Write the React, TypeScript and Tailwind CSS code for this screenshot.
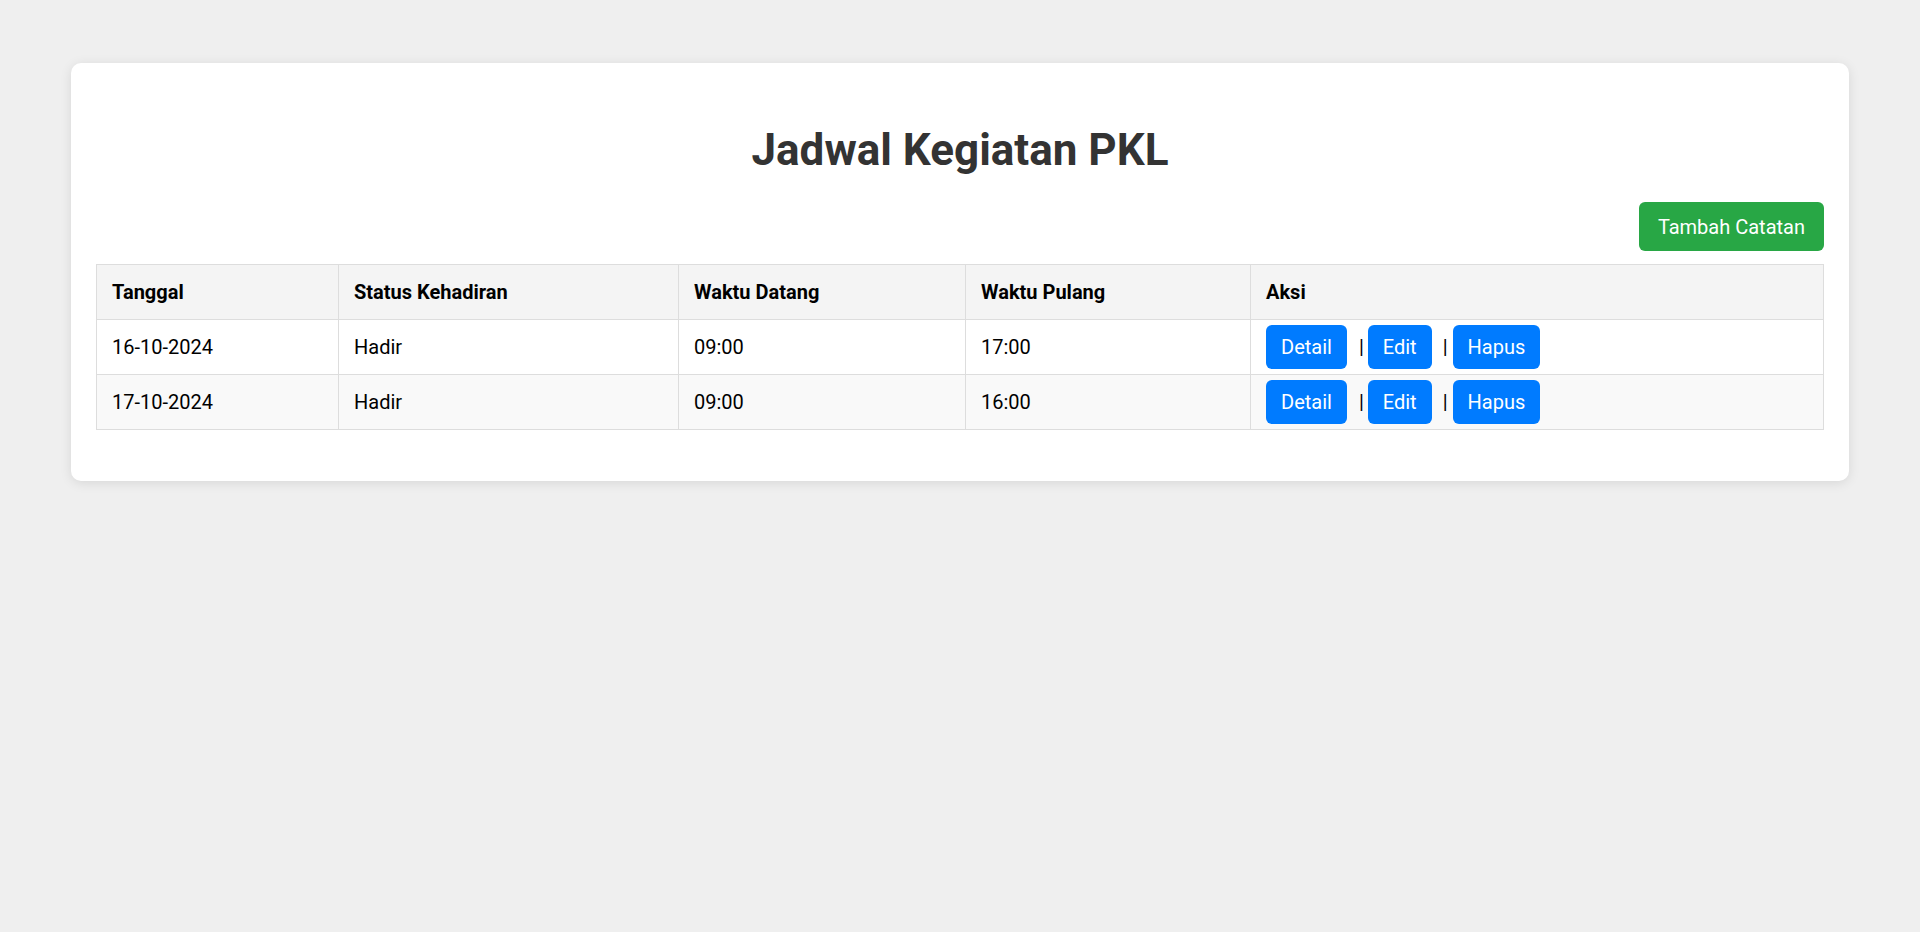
import React from "react";

const rows = [
  { tanggal: "16-10-2024", status: "Hadir", datang: "09:00", pulang: "17:00" },
  { tanggal: "17-10-2024", status: "Hadir", datang: "09:00", pulang: "16:00" },
];

function ActionBtn({ label }: { label: string }) {
  return (
    <a
      href="#"
      className="inline-flex h-[44px] items-center rounded-[6px] bg-[#007bff] px-[15px] text-[20px] text-white no-underline"
    >
      {label}
    </a>
  );
}

export default function App() {
  return (
    <div
      className="min-h-[932px] bg-[#efefef] pt-[63px] text-black"
      style={{ fontFamily: "Roboto, 'Noto Sans', Arial, sans-serif" }}
    >
      <div className="mx-[71px] rounded-[10px] bg-white p-[25px] shadow-[0_2px_12px_rgba(0,0,0,0.1)]">
        <h1 className="mt-[36px] text-center text-[44px] font-bold leading-[53px] text-[#333]">
          Jadwal Kegiatan PKL
        </h1>
        <div className="mt-[25px] flex justify-end">
          <a
            href="#"
            className="inline-flex h-[49px] items-center rounded-[6px] bg-[#28a745] px-[19px] text-[20px] text-white"
          >
            Tambah Catatan
          </a>
        </div>
        <table className="mt-[13px] mb-[26px] w-full table-fixed border-collapse text-left text-[20px]">
          <colgroup>
            <col className="w-[242px]" />
            <col className="w-[340px]" />
            <col className="w-[287px]" />
            <col className="w-[285px]" />
            <col />
          </colgroup>
          <thead>
            <tr className="bg-[#f4f4f4]">
              {["Tanggal", "Status Kehadiran", "Waktu Datang", "Waktu Pulang", "Aksi"].map((h) => (
                <th
                  key={h}
                  className="h-[55px] border border-[#dddddd] px-[15px] align-middle font-bold"
                >
                  {h}
                </th>
              ))}
            </tr>
          </thead>
          <tbody>
            {rows.map((r, i) => (
              <tr key={i} className={i % 2 === 1 ? "bg-[#f9f9f9]" : "bg-white"}>
                <td className="h-[55px] border border-[#dddddd] px-[15px] align-middle">{r.tanggal}</td>
                <td className="h-[55px] border border-[#dddddd] px-[15px] align-middle">{r.status}</td>
                <td className="h-[55px] border border-[#dddddd] px-[15px] align-middle">{r.datang}</td>
                <td className="h-[55px] border border-[#dddddd] px-[15px] align-middle">{r.pulang}</td>
                <td className="h-[55px] border border-[#dddddd] px-[15px] align-middle">
                  <div className="flex items-center">
                    <ActionBtn label="Detail" />
                    <span className="ml-[12px] mr-[4px]">|</span>
                    <ActionBtn label="Edit" />
                    <span className="ml-[11px] mr-[5px]">|</span>
                    <ActionBtn label="Hapus" />
                  </div>
                </td>
              </tr>
            ))}
          </tbody>
        </table>
      </div>
    </div>
  );
}
